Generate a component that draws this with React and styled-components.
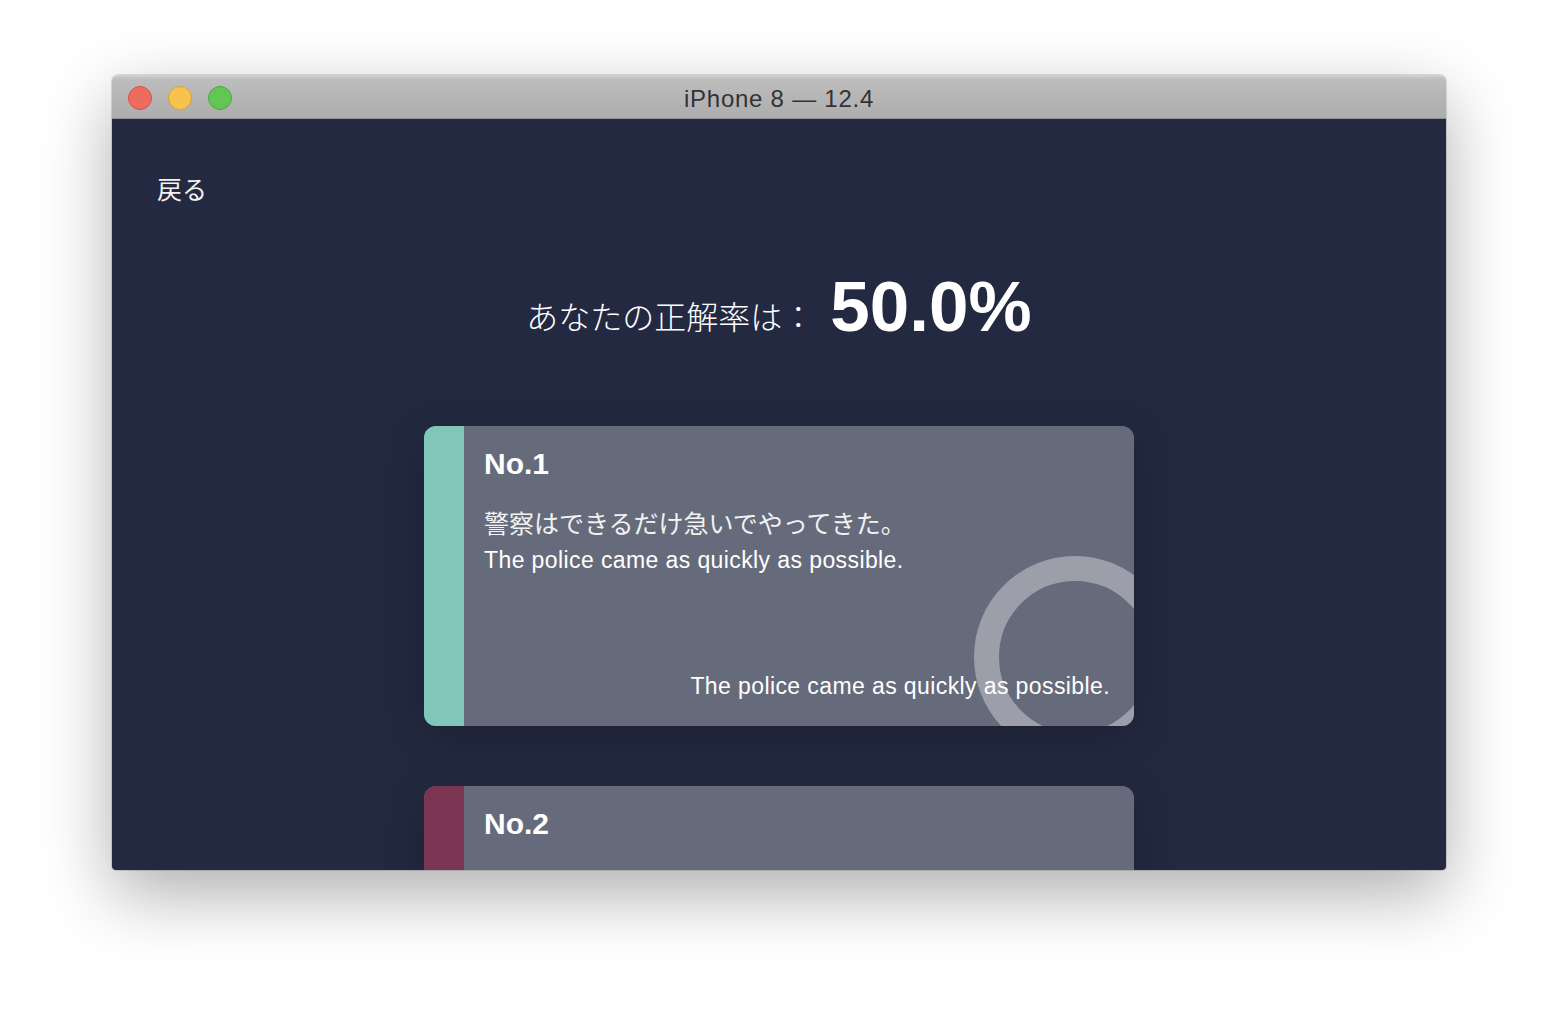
import React from 'react'
import styled, { createGlobalStyle } from 'styled-components'

const GlobalStyle = createGlobalStyle`
    html, body {
        margin: 0;
        padding: 0;
        background: #ffffff;
    }
    body {
        font-family: "Liberation Sans", "Noto Sans CJK JP", sans-serif;
    }
`

const results = [
    {
        no: 1,
        color: '#80c6b9',
        ja: '警察はできるだけ急いでやってきた。',
        en: 'The police came as quickly as possible.',
        answer: 'The police came as quickly as possible.',
        correct: true,
    },
    {
        no: 2,
        color: '#7b3553',
        ja: '',
        en: '',
        answer: '',
        correct: false,
    },
]

function App() {
    return (
        <Page>
            <GlobalStyle />
            <Window>
                <TitleBar>
                    <Lights>
                        <Light color="#ee6b5f" edge="#d2564b" />
                        <Light color="#f6c34f" edge="#d9a43a" />
                        <Light color="#62c655" edge="#4ba942" />
                    </Lights>
                    <Title>iPhone 8 — 12.4</Title>
                </TitleBar>
                <Screen>
                    <BackLink>戻る</BackLink>
                    <Score>
                        <ScoreLabel>あなたの正解率は：</ScoreLabel>
                        <ScoreValue>50.0%</ScoreValue>
                    </Score>
                    <CardList>
                        {results.map(r =>
                            <Card key={r.no}>
                                <Stripe color={r.color} />
                                <CardBody>
                                    {r.correct && <Ring />}
                                    <CardNo>No.{r.no}</CardNo>
                                    <Question>{r.ja}</Question>
                                    <Answer>{r.en}</Answer>
                                    <UserAnswer>{r.answer}</UserAnswer>
                                </CardBody>
                            </Card>
                        )}
                    </CardList>
                </Screen>
            </Window>
        </Page>
    )
}

export default App

const Page = styled.div`
    width: 1558px;
    height: 1018px;
    box-sizing: border-box;
    padding-top: 75px;
    display: flex;
    justify-content: center;
    overflow: hidden;
`

const Window = styled.div`
    width: 1334px;
    height: 795px;
    border-radius: 6px 6px 4px 4px;
    overflow: hidden;
    display: flex;
    flex-direction: column;
    box-shadow: 0 0 0 1px rgba(0, 0, 0, 0.12), 0 24px 70px rgba(0, 0, 0, 0.32);
`

const TitleBar = styled.div`
    height: 44px;
    flex-shrink: 0;
    position: relative;
    display: flex;
    align-items: center;
    justify-content: center;
    background: linear-gradient(#d3d3d3, #bdbdbd 10%, #adadad);
    border-bottom: 1px solid #8f8f8f;
    box-sizing: border-box;
`

const Lights = styled.div`
    position: absolute;
    left: 16px;
    top: 11px;
    display: flex;
    gap: 16px;
`

const Light = styled.span`
    width: 24px;
    height: 24px;
    border-radius: 50%;
    box-sizing: border-box;
    background: ${p => p.color};
    border: 1px solid ${p => p.edge};
`

const Title = styled.div`
    font-size: 24px;
    letter-spacing: 0.75px;
    color: #333333;
    padding-top: 5px;
`

const Screen = styled.div`
    flex: 1;
    background: #232940;
    overflow: hidden;
    display: flex;
    flex-direction: column;
    color: #ffffff;
`

const BackLink = styled.div`
    margin: 55px 0 0 45px;
    font-size: 25px;
    line-height: 28px;
    color: #f2f2f2;
    font-family: "Noto Sans CJK JP", sans-serif;
`

const Score = styled.div`
    margin-top: 65px;
    display: flex;
    justify-content: center;
    align-items: baseline;
    gap: 16px;
`

const ScoreLabel = styled.span`
    font-size: 32px;
    font-family: "Noto Sans CJK JP", sans-serif;
    font-weight: 300;
    position: relative;
    top: -2px;
`

const ScoreValue = styled.span`
    font-size: 71px;
    font-weight: 700;
    line-height: 80px;
`

const CardList = styled.div`
    margin-top: 79px;
    display: flex;
    flex-direction: column;
    align-items: center;
    gap: 60px;
`

const Card = styled.div`
    width: 710px;
    height: 300px;
    flex-shrink: 0;
    border-radius: 12px;
    overflow: hidden;
    display: flex;
    background: #666b7b;
    box-shadow: 0 10px 40px rgba(0, 0, 0, 0.22);
`

const Stripe = styled.div`
    width: 40px;
    flex-shrink: 0;
    background: ${p => p.color};
`

const CardBody = styled.div`
    flex: 1;
    position: relative;
    overflow: hidden;
    display: flex;
    flex-direction: column;
    padding: 18px 24px 26px 20px;
`

const Ring = styled.div`
    position: absolute;
    left: 510px;
    top: 130px;
    width: 202px;
    height: 202px;
    border-radius: 50%;
    box-sizing: border-box;
    border: 25px solid #9c9ea9;
`

const CardNo = styled.div`
    position: relative;
    font-size: 30px;
    font-weight: 700;
    line-height: 40px;
`

const Question = styled.div`
    position: relative;
    margin-top: 22px;
    font-size: 25px;
    line-height: 32px;
    font-family: "Noto Sans CJK JP", sans-serif;
    font-weight: 400;
    color: #f2f2f2;
`

const Answer = styled.div`
    position: relative;
    margin-top: 8px;
    font-size: 23px;
    letter-spacing: 0.4px;
    line-height: 28px;
`

const UserAnswer = styled.div`
    position: relative;
    margin-top: auto;
    text-align: right;
    font-size: 23px;
    letter-spacing: 0.4px;
    line-height: 28px;
`
